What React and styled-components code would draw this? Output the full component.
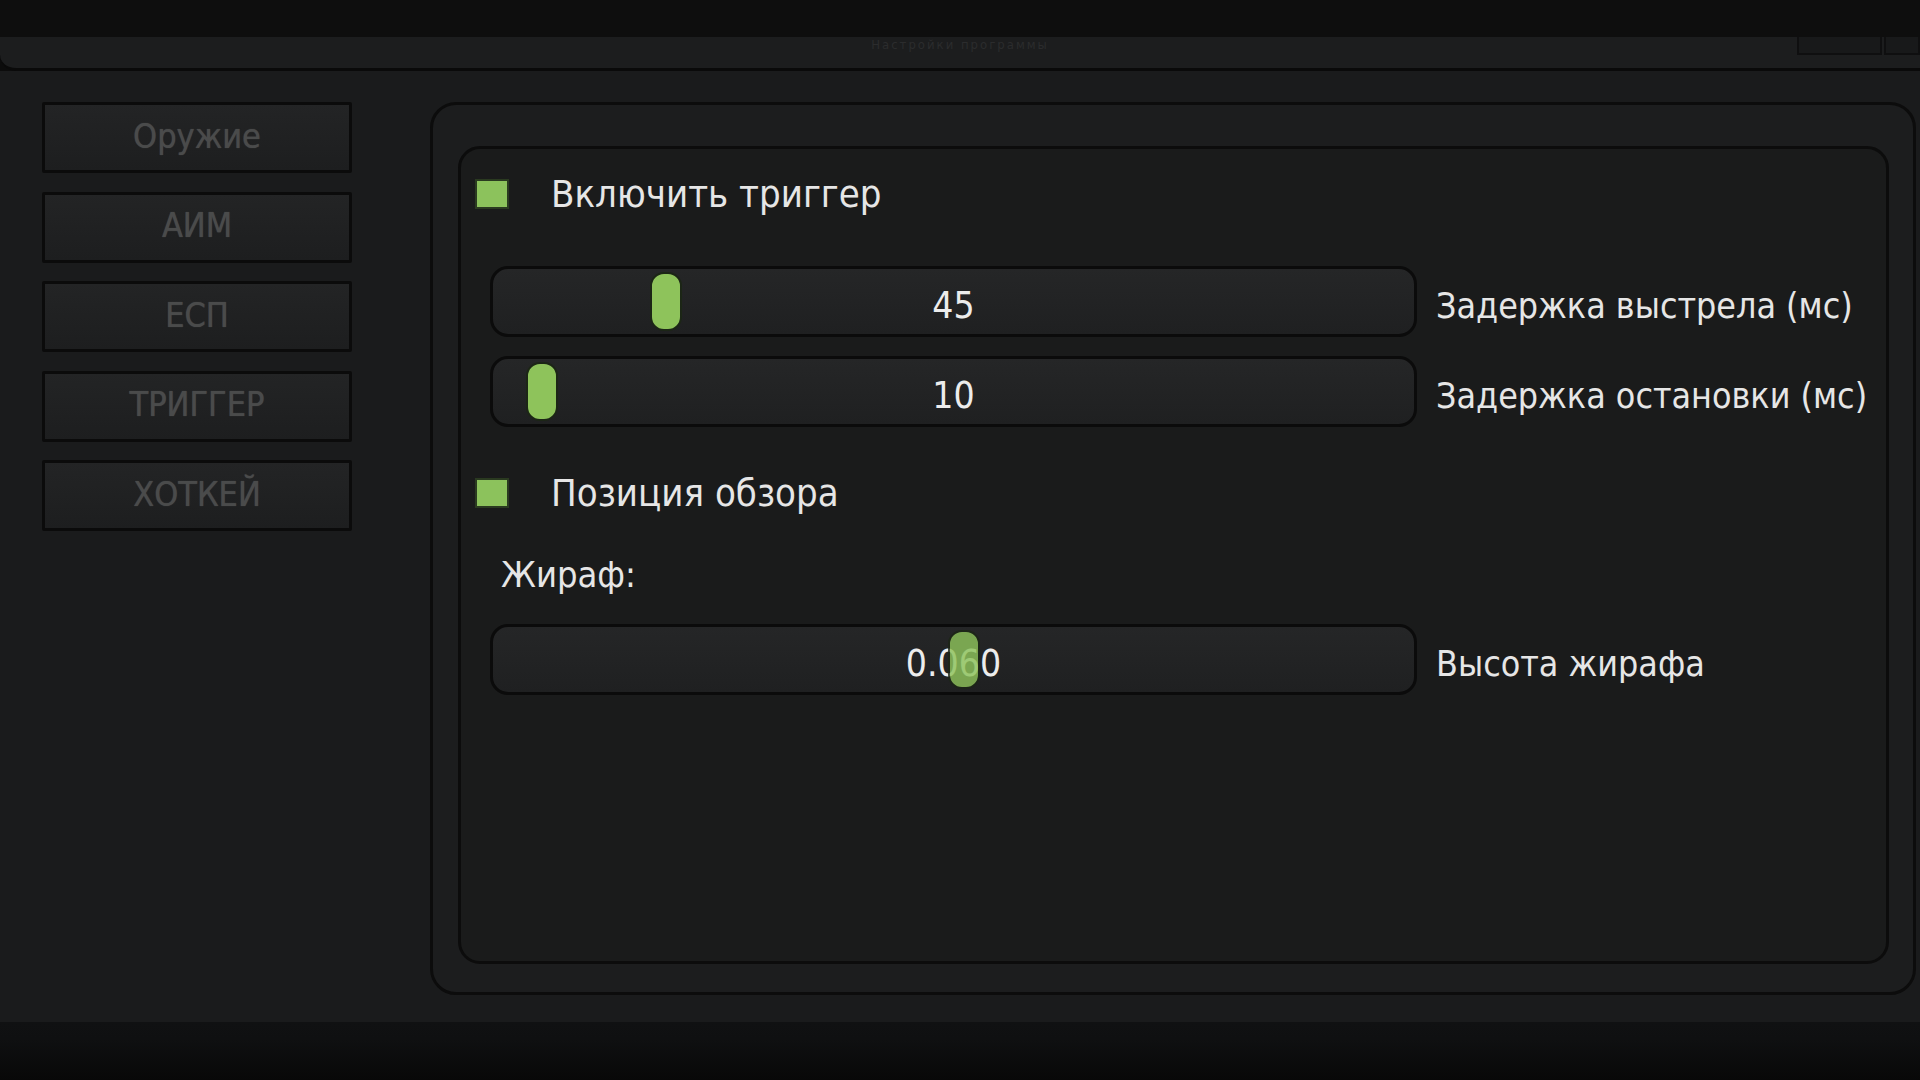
import React from 'react';
import styled, { createGlobalStyle } from 'styled-components';

const GlobalStyle = createGlobalStyle`
  html, body {
    margin: 0;
    padding: 0;
    background: #0c0c0c;
  }
  * { box-sizing: border-box; }
`;

const Screen = styled.div`
  width: 1920px;
  height: 1080px;
  display: flex;
  flex-direction: column;
  overflow: hidden;
  font-family: "DejaVu Sans Condensed", "DejaVu Sans", sans-serif;
  font-stretch: condensed;
  background: #0c0c0c;
`;

const TopBar = styled.div`
  height: 37px;
  flex-shrink: 0;
  background: #0e0e0e;
`;

const TitleStrip = styled.div`
  height: 34px;
  flex-shrink: 0;
  display: flex;
  justify-content: center;
  align-items: flex-start;
  position: relative;
  background: #1c1d1e;
  border-bottom: 3px solid #0a0a0a;
  border-bottom-left-radius: 16px;
`;

const TitleText = styled.span`
  margin-top: 1px;
  font-size: 13px;
  line-height: 14px;
  color: #2b2c2d;
  letter-spacing: 2px;
`;

const WinButtons = styled.div`
  position: absolute;
  top: 0;
  right: 0;
  display: flex;
  gap: 2px;
`;

const WinButton = styled.div`
  width: ${p => p.w}px;
  height: 18px;
  background: #18191a;
  border: 2px solid #0f0f10;
  border-top: none;
`;

const Body = styled.div`
  flex: 1;
  display: flex;
  padding: 31px 4px 27px 42px;
  background: #1a1b1c;
`;

const Sidebar = styled.nav`
  width: 310px;
  display: flex;
  flex-direction: column;
  gap: 18.5px;
  margin-right: 78px;
`;

const NavButton = styled.div`
  height: 71px;
  display: flex;
  align-items: center;
  justify-content: center;
  padding-bottom: 4px;
  background: linear-gradient(#232425, #1d1e1f);
  border: 3px solid #0b0b0b;
  border-radius: 2px;
  color: #4a4b4b;
  font-size: 34px;
  text-shadow: 0 0 1px #4a4b4b;
`;

const OuterPanel = styled.div`
  flex: 1;
  display: flex;
  padding: 41px 24px 28px 25px;
  background: #1c1d1e;
  border: 3px solid #0c0c0c;
  border-radius: 26px;
`;

const InnerPanel = styled.div`
  flex: 1;
  display: flex;
  flex-direction: column;
  background: #1a1b1b;
  border: 3px solid #0c0c0c;
  border-radius: 22px;
  color: #e6e6e6;
`;

const CheckRow = styled.div`
  height: 40px;
  display: flex;
  align-items: center;
  gap: 42px;
  padding-left: 14px;
  margin-top: ${p => p.mt}px;
  font-size: 38px;
`;

const CheckBox = styled.div`
  width: 34px;
  height: 30px;
  background: #8cc25c;
  border: 2px solid #2a3a20;
`;

const SubLabel = styled.div`
  height: 40px;
  display: flex;
  align-items: center;
  padding-left: 40px;
  margin-top: 41px;
  font-size: 36px;
`;

const SliderRow = styled.div`
  display: flex;
  align-items: center;
  gap: 19px;
  padding-left: 29px;
  margin-top: ${p => p.mt}px;
`;

const Track = styled.div`
  position: relative;
  width: 927px;
  height: 71px;
  display: flex;
  align-items: center;
  justify-content: center;
  padding-top: 8px;
  background: linear-gradient(#252627, #1f2021);
  border: 3px solid #0b0b0b;
  border-radius: 18px;
  font-size: 37px;
  color: #ececec;
`;

const Thumb = styled.div`
  position: absolute;
  top: 3px;
  bottom: 3px;
  width: 32px;
  background: #8ec35b;
  border: 2px solid #1c2616;
  border-radius: 14px;
  opacity: ${p => (p.over ? 0.82 : 1)};
`;

const Value = styled.span`
  position: relative;
`;

const SliderLabel = styled.span`
  padding-top: 8px;
  font-size: 35.5px;
  color: #e6e6e6;
  white-space: nowrap;
`;

const BottomBar = styled.div`
  height: 58px;
  flex-shrink: 0;
  background: linear-gradient(#101112 0, #0f1011 30%, #080808 100%);
`;

const navItems = ['Оружие', 'АИМ', 'ЕСП', 'ТРИГГЕР', 'ХОТКЕЙ'];

const Slider = ({ value, min, max, label, digits = 0, mt, over }) => {
  const pct = (value - min) / (max - min);
  const left = `calc((100% - 32px) * ${pct} - 3px)`;
  return (
    <SliderRow mt={mt}>
      <Track>
        {over ? null : <Thumb style={{ left }} />}
        <Value>{value.toFixed(digits)}</Value>
        {over ? <Thumb over style={{ left }} /> : null}
      </Track>
      <SliderLabel>{label}</SliderLabel>
    </SliderRow>
  );
};

const App = () => {
  return (
    <Screen>
      <GlobalStyle />
      <TopBar />
      <TitleStrip>
        <TitleText>Настройки программы</TitleText>
        <WinButtons>
          <WinButton w={85} />
          <WinButton w={36} />
        </WinButtons>
      </TitleStrip>
      <Body>
        <Sidebar>
          {navItems.map(item => (
            <NavButton key={item}>{item}</NavButton>
          ))}
        </Sidebar>
        <OuterPanel>
          <InnerPanel>
            <CheckRow mt={25}>
              <CheckBox />
              Включить триггер
            </CheckRow>
            <Slider mt={52} value={45} min={0} max={250} label="Задержка выстрела (мс)" />
            <Slider mt={19} value={10} min={0} max={250} label="Задержка остановки (мс)" />
            <CheckRow mt={46}>
              <CheckBox />
              Позиция обзора
            </CheckRow>
            <SubLabel>Жираф:</SubLabel>
            <Slider mt={30} value={0.06} min={-2} max={2} digits={3} over label="Высота жирафа" />
          </InnerPanel>
        </OuterPanel>
      </Body>
      <BottomBar />
    </Screen>
  );
};

export default App;
